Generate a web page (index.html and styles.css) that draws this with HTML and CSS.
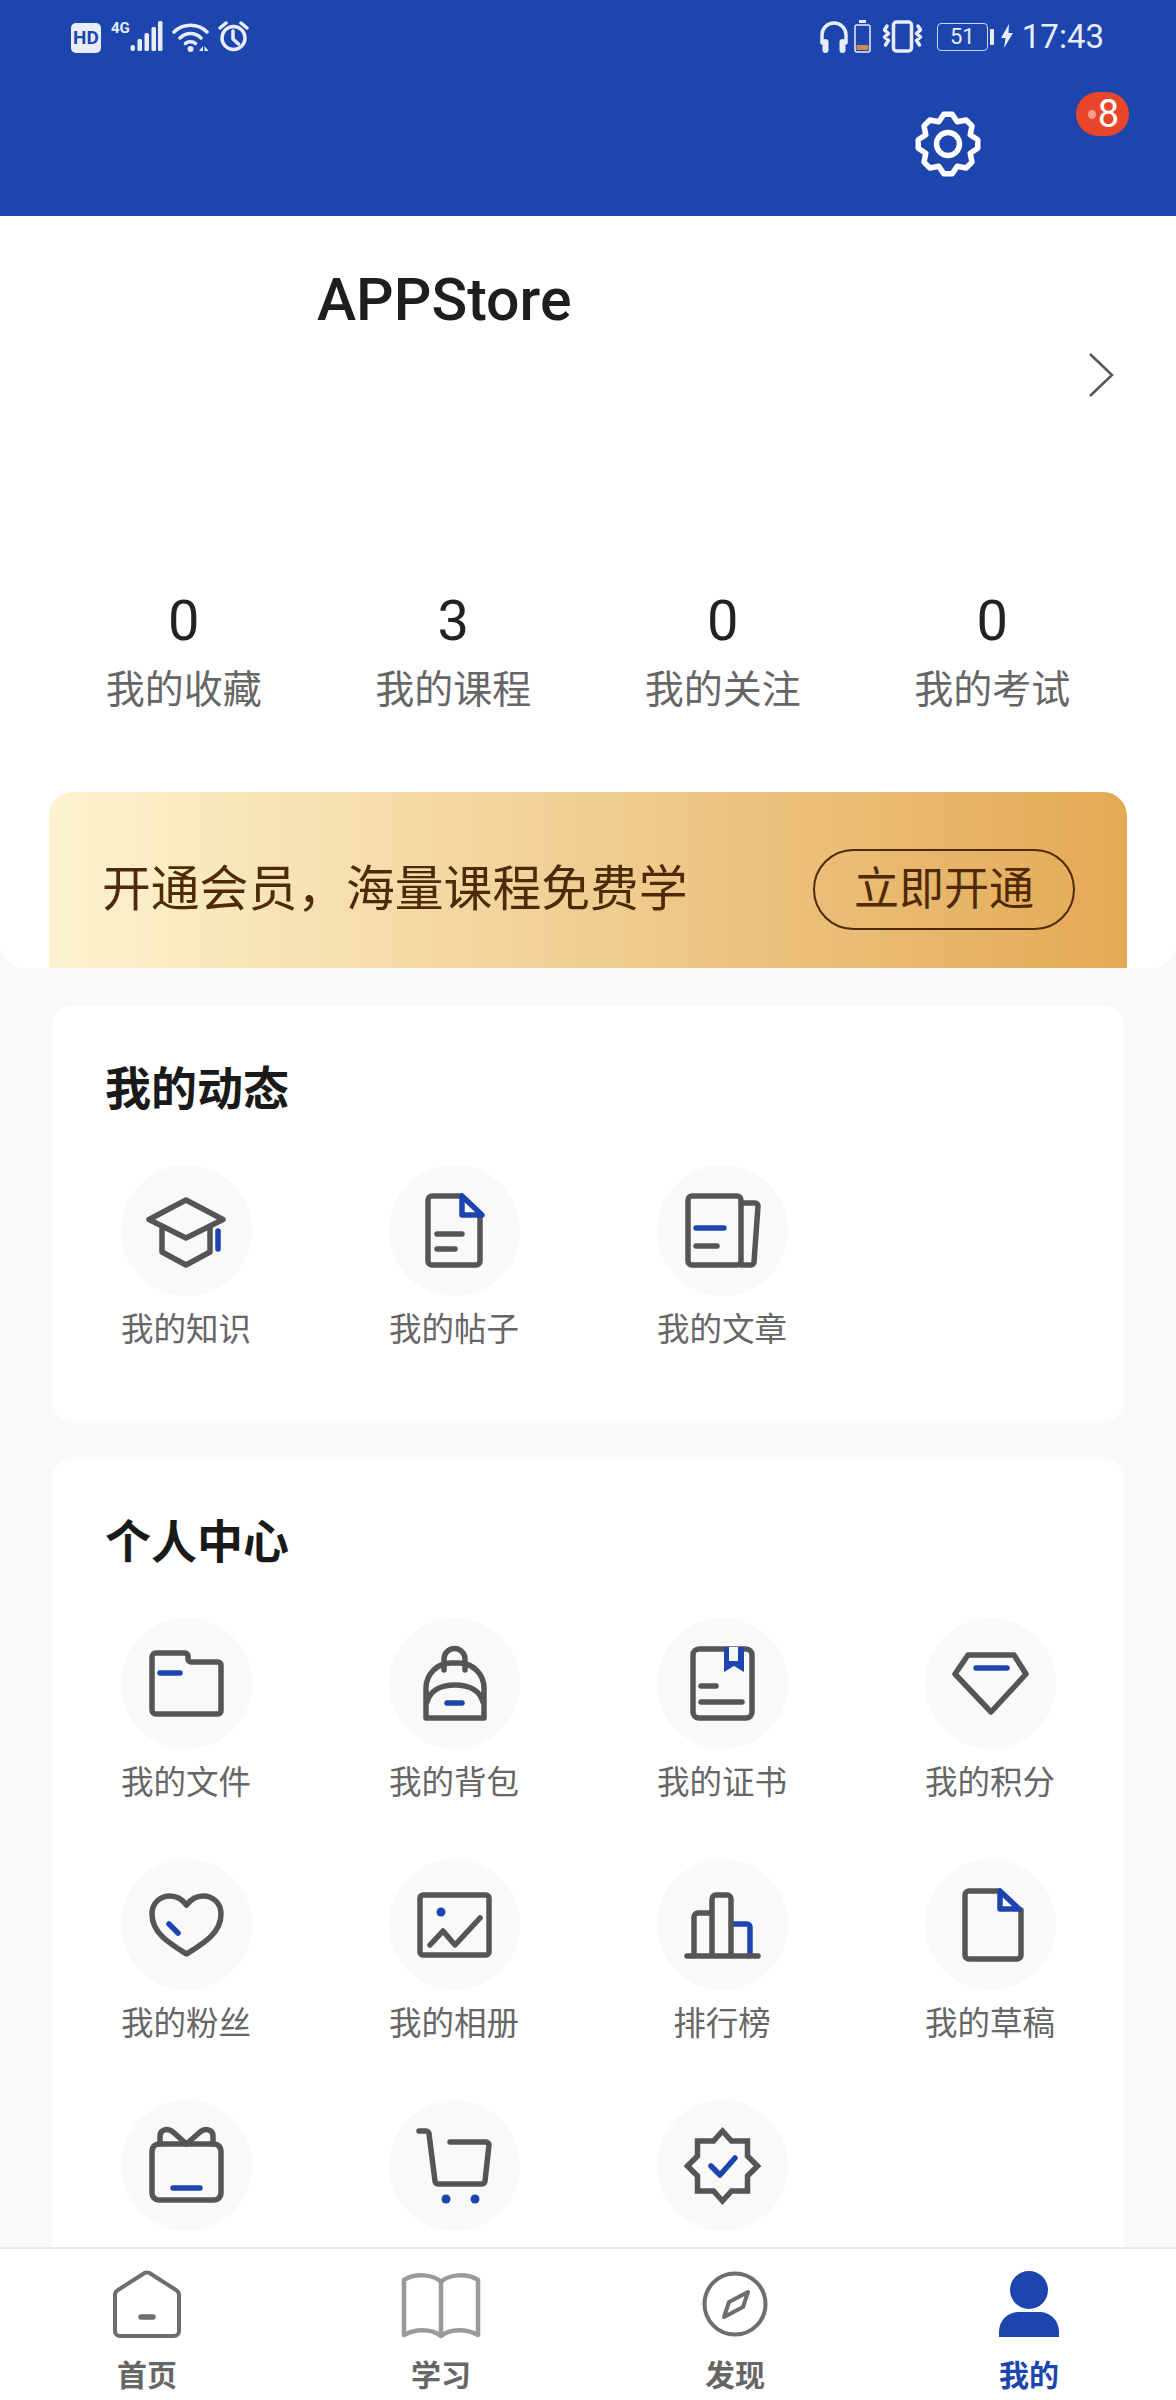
FILE: index.html
```html
<!DOCTYPE html>
<html lang="zh-CN">
<head>
    <meta charset="UTF-8">
    <meta name="viewport" content="width=device-width, initial-scale=1.0">
    <title>我的</title>
    <link rel="stylesheet" href="styles.css">
</head>
<body>
<div class="page">
    <header class="header">
        <div class="status-bar">
            <div class="status-left">
                <span class="hd">HD</span>
                <span class="net">4G</span>
                <svg class="st-signal" width="33" height="32" viewBox="0 0 33 32"><rect x="0.500" y="25" width="4.500" height="6" rx="2"/><rect x="7.500" y="19" width="4.500" height="12" rx="1.500"/><rect x="14.500" y="13" width="4.500" height="18" rx="1.500"/><rect x="21.500" y="7" width="4.500" height="24" rx="1.500"/><rect x="28" y="1" width="4.500" height="30" rx="1.500"/></svg>
                <svg class="st-wifi" width="38" height="32" viewBox="0 0 38 32"><path class="st-line" d="M2 11C11 2 26 2 35 11M8 17C14 11 23 11 29 17M13.500 22.500C16 20 21 20 23.500 22.500"/><circle cx="18.500" cy="28" r="3"/><path d="M27 30l4-5v5zM32.500 25l4 5h-4z"/></svg>
                <svg class="st-alarm" width="31" height="32" viewBox="0 0 31 32"><circle class="st-line" cx="15.500" cy="18" r="11.500"/><path class="st-line" d="M15 11v8l5.500 5M2 8l6-5M29 8l-6-5"/></svg>
            </div>
            <div class="status-right">
                <svg class="st-head" width="30" height="33" viewBox="0 0 30 33"><path class="st-line" d="M3 23v-8a12 12 0 0 1 24 0v8"/><rect x="3.500" y="19" width="6" height="14" rx="3"/><rect x="20.500" y="19" width="6" height="14" rx="3"/></svg>
                <svg class="st-batt" width="17" height="33" viewBox="0 0 17 33"><rect x="5" y="0" width="7" height="3"/><rect class="st-thin" x="1" y="5" width="15" height="27" rx="2"/><rect class="st-low" x="2.500" y="25" width="12" height="5"/></svg>
                <svg class="st-vib" width="41" height="33" viewBox="0 0 41 33"><rect class="st-line" x="11.500" y="2" width="18" height="29" rx="3"/><path class="st-line" d="M5 6l-2.500 4 4 3.500-4 3.500 4 3.500-3 4.500M36 6l2.500 4-4 3.500 4 3.500-4 3.500 3 4.500"/></svg>
                <span class="level">51</span>
                <span class="level-tip"></span>
                <svg class="st-bolt" width="12" height="24" viewBox="0 0 12 24"><path d="M8 0L0 14h4.500L3 24l9-15H7.500z"/></svg>
                <span class="clock">17:43</span>
            </div>
        </div>
        <div class="toolbar">
            <svg class="gear" width="66" height="66" viewBox="0 0 66 66"><polygon points="37.200,3.300 42.200,10.800 51.100,9 57,14.900 55.200,23.800 62.700,28.800 62.700,37.200 55.200,42.200 57,51.100 51.100,57 42.200,55.200 37.200,62.700 28.800,62.700 23.800,55.200 14.900,57 9,51.100 10.800,42.200 3.300,37.200 3.300,28.800 10.800,23.800 9,14.900 14.900,9 23.800,10.800 28.800,3.300"/><circle cx="33" cy="33" r="11.500"/></svg>
            <div class="badge"><span class="badge-dot"></span>8</div>
        </div>
    </header>

    <section class="profile">
        <div class="user-row">
            <div class="user-name">APPStore</div>
            <svg class="chevron" width="26" height="46" viewBox="0 0 26 46"><path d="M2 2l22 21L2 44"/></svg>
        </div>
        <div class="stats">
            <div class="stat"><div class="stat-num">0</div><div class="stat-label">我的收藏</div></div>
            <div class="stat"><div class="stat-num">3</div><div class="stat-label">我的课程</div></div>
            <div class="stat"><div class="stat-num">0</div><div class="stat-label">我的关注</div></div>
            <div class="stat"><div class="stat-num">0</div><div class="stat-label">我的考试</div></div>
        </div>
        <div class="vip">
            <span class="vip-text">开通会员，海量课程免费学</span>
            <span class="vip-btn">立即开通</span>
        </div>
    </section>

    <main class="content">
        <section class="card">
            <h3 class="card-title">我的动态</h3>
            <div class="tiles">
                <div class="tile">
                    <svg class="icon" viewBox="0 0 131 131"><path class="ln" d="M65 35L28 54.500 65 73 102 54.500zM41 62v25l24 13 24-13V62"/><path class="bl" d="M97 66v18"/></svg>
                    <span class="tile-label">我的知识</span>
                </div>
                <div class="tile">
                    <svg class="icon" viewBox="0 0 131 131"><path class="ln" d="M72 31H43a4 4 0 0 0-4 4v61a4 4 0 0 0 4 4h44a4 4 0 0 0 4-4V51"/><path class="ln" d="M48 69h25M48 84h18"/><path class="bl-sharp" d="M73 31v19h20z"/></svg>
                    <span class="tile-label">我的帖子</span>
                </div>
                <div class="tile">
                    <svg class="icon" viewBox="0 0 131 131"><rect class="ln" x="31" y="31" width="53" height="69" rx="4"/><path class="ln" d="M87 38h11a3 3 0 0 1 3 3l-4 56a3 3 0 0 1-3 3H84"/><path class="bl" d="M39 63h28"/><path class="ln" d="M39 81h21"/></svg>
                    <span class="tile-label">我的文章</span>
                </div>
            </div>
        </section>

        <section class="card">
            <h3 class="card-title">个人中心</h3>
            <div class="tiles">
                <div class="tile">
                    <svg class="icon" viewBox="0 0 131 131"><path class="ln" d="M35 35h29a3 3 0 0 1 3 3v3a3 3 0 0 0 3 3h27a3 3 0 0 1 3 3v46a3 3 0 0 1-3 3H35a4 4 0 0 1-4-4V39a4 4 0 0 1 4-4z"/><path class="bl" d="M39 55h20"/></svg>
                    <span class="tile-label">我的文件</span>
                </div>
                <div class="tile">
                    <svg class="icon" viewBox="0 0 131 131"><path class="ln" d="M37 100V70a25 25 0 0 1 25-25h8a25 25 0 0 1 25 25v30zM55 52V41a10 10 0 0 1 21 0v11M38 84c3-11 13-17 28-17s25 6 28 17"/><path class="bl" d="M58 85h15"/></svg>
                    <span class="tile-label">我的背包</span>
                </div>
                <div class="tile">
                    <svg class="icon" viewBox="0 0 131 131"><rect class="ln" x="36" y="31" width="59" height="69" rx="6"/><path class="ln" d="M44 68h15M44 84h41"/><path class="bl-mark" d="M67 29h20v25l-10-6-10 6z"/><path class="bl-hole" d="M72 29h9v14h-9z"/></svg>
                    <span class="tile-label">我的证书</span>
                </div>
                <div class="tile">
                    <svg class="icon" viewBox="0 0 131 131"><path class="ln" d="M43 37h46l12 19-35 38-36-38z"/><path class="bl" d="M51 50h31"/></svg>
                    <span class="tile-label">我的积分</span>
                </div>
                <div class="tile">
                    <svg class="icon" viewBox="0 0 131 131"><path class="ln" d="M65.500 95C48 84 31 74 31 55c0-11 8-18 18-18 7 0 12 3 16.500 9C70 40 75 37 82 37c10 0 18 7 18 18 0 19-17 29-34.500 40z"/><path class="bl" d="M48 65l9 9"/></svg>
                    <span class="tile-label">我的粉丝</span>
                </div>
                <div class="tile">
                    <svg class="icon" viewBox="0 0 131 131"><rect class="ln" x="31" y="36" width="69" height="60" rx="3"/><circle class="dot" cx="52" cy="53" r="4.500"/><path class="ln" d="M41 86l13-14 12 14 25-27"/></svg>
                    <span class="tile-label">我的相册</span>
                </div>
                <div class="tile">
                    <svg class="icon" viewBox="0 0 131 131"><path class="bl" d="M77 65h13a3 3 0 0 1 3 3v28"/><path class="ln" d="M37 96V58a4 4 0 0 1 4-4h13M55 96V40a4 4 0 0 1 4-4h11a4 4 0 0 1 4 4v56M30 97h71"/></svg>
                    <span class="tile-label">排行榜</span>
                </div>
                <div class="tile">
                    <svg class="icon" viewBox="0 0 131 131"><path class="ln" d="M73 32H44a4 4 0 0 0-4 4v60a4 4 0 0 0 4 4h48a4 4 0 0 0 4-4V51"/><path class="bl-sharp" d="M75 32v18h19z"/></svg>
                    <span class="tile-label">我的草稿</span>
                </div>
                <div class="tile">
                    <svg class="icon" viewBox="0 0 131 131"><rect class="ln" x="31" y="44" width="69" height="56" rx="7"/><path class="ln" d="M65.500 44L52 32c-5-4-13-3-13 4v8M65.500 44L79 32c5-4 13-3 13 4v8"/><path class="bl" d="M52 88h27"/></svg>
                </div>
                <div class="tile">
                    <svg class="icon" viewBox="0 0 131 131"><path class="ln" d="M30 31h7a3 3 0 0 1 3 3l6 47a3 3 0 0 0 3 3h44a3 3 0 0 0 3-3l4-36a3 3 0 0 0-3-3H61"/><circle class="dot" cx="57" cy="99" r="4.500"/><circle class="dot" cx="86" cy="99" r="4.500"/></svg>
                </div>
                <div class="tile">
                    <svg class="icon" viewBox="0 0 131 131"><path class="ln-miter" d="M65.500 31l9 10h16v15l10 10-10 10v15h-16l-9 10-9-10h-16V76l-10-10 10-10V41h16z"/><path class="bl" d="M54 66l9 9 15-17"/></svg>
                </div>
            </div>
        </section>
    </main>

    <nav class="tabbar">
        <div class="tab">
            <svg class="tab-icon" viewBox="0 0 80 74"><path class="nav-ln" d="M36 6L11 22c-2 1-3 3-3 5v36a5 5 0 0 0 5 5h54a5 5 0 0 0 5-5V27c0-2-1-4-3-5L44 6c-2-2-6-2-8 0z"/><path class="nav-dash" d="M34 49h12"/></svg>
            <span class="tab-label">首页</span>
        </div>
        <div class="tab">
            <svg class="tab-icon" viewBox="0 0 80 74"><path class="nav-book" d="M40 14C32 6 14 5 3 12v55c11-6 27-7 37 1 10-8 26-7 37-1V12C66 5 48 6 40 14zM40 14v54"/></svg>
            <span class="tab-label">学习</span>
        </div>
        <div class="tab">
            <svg class="tab-icon" viewBox="0 0 80 74"><circle class="nav-ln" cx="40" cy="36" r="30.500"/><path class="nav-ln" d="M53 24l-19 10-5 15 19-10z"/></svg>
            <span class="tab-label">发现</span>
        </div>
        <div class="tab tab-active">
            <svg class="tab-icon" viewBox="0 0 80 74"><circle class="nav-fill" cx="40" cy="22" r="19"/><path class="nav-fill" d="M10 69V64c0-12 9-20 20-20h20c11 0 20 8 20 20v5z"/></svg>
            <span class="tab-label">我的</span>
        </div>
    </nav>
</div>
</body>
</html>
```

FILE: styles.css
```css
* {
    box-sizing: border-box;
}

body {
    margin: 0;
    background: #f9f9f9;
    font-family: "Noto Sans CJK SC", Roboto, sans-serif;
}

.page {
    position: relative;
    width: 1176px;
    height: 2400px;
    overflow: hidden;
    background: #f9f9f9;
}

/* top blue area */
.header {
    height: 216px;
    background: #1c46ad;
}

.status-bar {
    display: flex;
    justify-content: space-between;
    height: 74px;
    padding: 20px 72px 0 71px;
}

.status-left,
.status-right {
    display: flex;
    align-items: flex-start;
}

.status-bar svg {
    fill: #e8edf8;
    display: block;
}

.st-line {
    fill: none !important;
    stroke: #e8edf8;
    stroke-width: 3.5;
    stroke-linecap: round;
    stroke-linejoin: round;
}

.hd {
    width: 30px;
    height: 30px;
    margin-top: 3px;
    border-radius: 5px;
    background: #e8edf8;
    color: #1c46ad;
    font: 700 19px/30px Roboto, sans-serif;
    text-align: center;
}

.net {
    width: 19px;
    margin-left: 10px;
    color: #e8edf8;
    font: 700 15px/16px Roboto, sans-serif;
}

.st-wifi {
    margin-left: 9px;
    margin-top: 1px;
}

.st-alarm {
    margin-left: 8px;
}

.st-batt {
    margin-left: 5px;
}

.st-thin {
    fill: none !important;
    stroke: #e8edf8;
    stroke-width: 1.5;
}

.st-low {
    fill: #d08a50;
}

.st-vib {
    margin-left: 11px;
}

.level {
    width: 51px;
    height: 28px;
    margin: 3px 0 0 14px;
    border: 1.5px solid #c9d5f0;
    border-radius: 4px;
    color: #e8edf8;
    font: 400 22px/25px Roboto, sans-serif;
    text-align: center;
}

.level-tip {
    width: 4px;
    height: 16px;
    margin: 9px 0 0 2px;
    border-radius: 1px;
    background: #e8edf8;
}

.st-bolt {
    margin: 4px 0 0 7px;
}

.clock {
    margin-left: 9px;
    color: #e8edf8;
    font: 400 33px/34px Roboto, sans-serif;
}

.toolbar {
    display: flex;
    justify-content: flex-end;
    align-items: flex-start;
    padding: 18px 47px 0 0;
}

.gear {
    margin: 19px 95px 0 0;
    fill: none;
    stroke: #fff;
    stroke-width: 5.5;
    stroke-linejoin: round;
}

.badge {
    position: relative;
    width: 53px;
    height: 44px;
    border-radius: 22px;
    background: #e8452a;
    color: #fff;
    font: 400 38px/44px Roboto, sans-serif;
    text-align: right;
    padding-right: 10px;
}

.badge-dot {
    position: absolute;
    left: 12px;
    top: 18px;
    width: 8px;
    height: 9px;
    border-radius: 50%;
    background: #f3a08c;
}

/* profile block */
.profile {
    height: 752px;
    padding-top: 1px;
    background: #fff;
    border-radius: 0 0 24px 24px;
}

.user-row {
    display: flex;
    justify-content: space-between;
    align-items: flex-start;
    height: 369px;
    padding: 48px 62px 0 317px;
}

.user-name {
    color: #1e1e1e;
    font: 500 59px/70px Roboto, sans-serif;
}

.chevron {
    margin-top: 87px;
    fill: none;
    stroke: #555;
    stroke-width: 2.5;
}

.stats {
    display: grid;
    grid-template-columns: repeat(4, 1fr);
    height: 206px;
    padding: 0 49px;
}

.stat {
    text-align: center;
}

.stat-num {
    height: 70px;
    color: #222;
    font: 400 56px/70px Roboto, sans-serif;
}

.stat-label {
    color: #666;
    font-size: 39px;
    line-height: 60px;
}

.vip {
    display: flex;
    justify-content: space-between;
    align-items: center;
    height: 176px;
    margin: 0 49px;
    padding: 10px 52px 0 53px;
    border-radius: 24px 24px 0 0;
    background: linear-gradient(90deg, #fdf3d0, #e3a955);
    color: #4f2a08;
}

.vip-text {
    font-size: 48.800px;
    line-height: 60px;
}

.vip-btn {
    width: 262px;
    height: 81px;
    margin-top: 9px;
    border: 2px solid #4f2a08;
    border-radius: 41px;
    font-size: 45px;
    line-height: 69px;
    text-align: center;
}

/* cards */
.content {
    display: flex;
    flex-direction: column;
    gap: 38px;
    padding: 38px 52px 0;
}

.card {
    padding: 56px 0 15px;
    background: #fff;
    border-radius: 20px;
}

.card-title {
    margin: 0 0 57px 53px;
    color: #1a1a1a;
    font-size: 46px;
    font-weight: 700;
    line-height: 46px;
}

.tiles {
    display: grid;
    grid-template-columns: repeat(4, 268px);
    grid-auto-rows: 241px;
}

.tile {
    display: flex;
    flex-direction: column;
    align-items: center;
}

.icon {
    display: block;
    width: 131px;
    height: 131px;
    border-radius: 50%;
    background: #f9f9f9;
}

.tile-label {
    margin-top: 15px;
    color: #666;
    font-size: 32.500px;
    line-height: 32px;
}

.ln,
.bl,
.ln-miter {
    fill: none;
    stroke-width: 5.5;
    stroke-linecap: round;
    stroke-linejoin: round;
}

.ln,
.ln-miter {
    stroke: #555;
}

.ln-miter {
    stroke-linejoin: miter;
    stroke-linecap: butt;
}

.bl {
    stroke: #1c46ad;
}

.bl-sharp {
    fill: #fff;
    stroke: #1c46ad;
    stroke-width: 5.5;
    stroke-linejoin: round;
}

.bl-mark {
    fill: #1c46ad;
}

.bl-hole {
    fill: #f9f9f9;
}

.dot {
    fill: #1c46ad;
}

/* bottom tabs sit over the scrolled content */
.tabbar {
    position: absolute;
    left: 0;
    right: 0;
    bottom: 0;
    display: grid;
    grid-template-columns: repeat(4, 294px);
    height: 153px;
    padding-top: 19px;
    background: #fff;
    border-top: 2px solid #e8e8e8;
}

.tab {
    display: flex;
    flex-direction: column;
    align-items: center;
}

.tab-icon {
    display: block;
    width: 80px;
    height: 74px;
}

.tab-label {
    margin-top: 13px;
    color: #666;
    font-size: 30px;
    font-weight: 700;
    line-height: 36px;
}

.tab-active .tab-label {
    color: #1c46ad;
}

.nav-ln,
.nav-dash {
    fill: none;
    stroke: #6e6e6e;
    stroke-width: 4;
    stroke-linecap: round;
    stroke-linejoin: round;
}

.nav-dash {
    stroke-width: 5.5;
}

.nav-book {
    fill: none;
    stroke: #9a9a9a;
    stroke-width: 4.5;
    stroke-linejoin: round;
}

.nav-fill {
    fill: #1c46ad;
}
```
